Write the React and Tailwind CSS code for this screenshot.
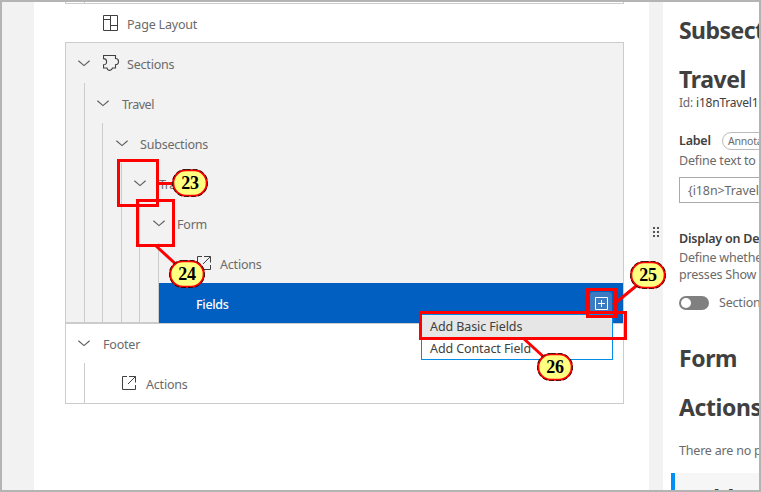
import React from "react";

const Chevron = ({ className = "" }) => (
  <svg className={`h-[7px] w-3 shrink-0 ${className}`} viewBox="0 0 12 7" fill="none" stroke="#5c5c5c" strokeWidth="1.15">
    <path d="M0.4 0.7 L6 5.6 L11.6 0.7" />
  </svg>
);

const LayoutIcon = () => (
  <svg className="h-4 w-[15px] shrink-0" viewBox="0 0 15 16" fill="none" stroke="#404040" strokeWidth="1">
    <path d="M.5 .5H14.5V15.5H.5Z M7.5 .5V15.5 M.5 4.5H7.5 M7.5 10.5H14.5" />
  </svg>
);

const PuzzleIcon = () => (
  <svg className="h-4 w-4 shrink-0" viewBox="0 0 16 16" fill="none" stroke="#404040" strokeWidth="1.1">
    <path d="M.5 .5H12.5V3.5C14.5 3.5 15.5 5 15.5 6.5S14.5 9.8 12.5 9.8V13H9.5C9 14.5 8.2 15.4 6.8 15.4S4.3 14.5 4 13H.5V9.8C2.5 9.8 3.6 8.5 3.6 6.7S2.5 3.6 .5 3.6Z" />
  </svg>
);

const ActionIcon = () => (
  <svg className="h-[14px] w-[14px] shrink-0" viewBox="0 0 14 14" fill="none" stroke="#404040" strokeWidth="1">
    <path d="M5 .5H.5V13.5H13.5V9 M7 .5H13.5V6.5 M13.5 .5L6 8" />
  </svg>
);

const Guide = ({ wide, end }) => (
  <span className={`shrink-0 self-stretch border-r border-[#cccccc] ${wide ? "w-[19px]" : "w-[18px]"} ${end ? "border-b" : ""}`} />
);

const Guides = ({ count, end }) =>
  Array.from({ length: count }, (_, i) => <Guide key={i} wide={i % 2 === 0} end={end} />);

const Row = ({ depth = 0, children }) => (
  <div className="flex h-10 items-center">
    <Guides count={depth} />
    {children}
  </div>
);

const Badge = ({ n, place }) => (
  <div className={`absolute ${place} flex h-7 w-9 items-center justify-center font-['Liberation_Serif',serif] text-[18px] font-bold leading-none tracking-[-0.2px] text-black`}>
    <svg className="absolute inset-0 h-7 w-9" viewBox="0 0 36 28" fill="none">
      <rect x="1.25" y="1.25" width="33.5" height="25.5" rx="12.5" fill="#ffff80" stroke="#ff0000" strokeWidth="2.2" />
      <rect x=".4" y=".4" width="35.2" height="27.2" rx="13.3" stroke="#000000" strokeWidth=".8" strokeDasharray="5 2" />
    </svg>
    <span className="relative">{n}</span>
  </div>
);

export default function App() {
  return (
    <div className="relative flex h-[492px] w-[761px] overflow-hidden border-2 border-[#b4b4b4] bg-white font-['Noto_Sans',sans-serif] text-[12.5px] leading-[18px] tracking-[-0.2px] text-[#6a6a6a]">
      <aside className="w-8 shrink-0 bg-[#f2f2f2]" />
      <main className="w-[615px] shrink-0 pl-[31px]">
        <div className="w-[559px]">
          <div className="flex h-0.5 border-x border-b border-[#cccccc]">
            <Guide wide />
          </div>
          <div className="flex h-[38px] items-center pl-[38px]">
            <LayoutIcon />
            <span className="ml-[9px] mt-[3px]">Page Layout</span>
          </div>
          <section className="border border-b-0 border-[#cccccc] bg-[#f2f2f2]">
            <Row><Chevron className="ml-3" /><span className="ml-[13px]"><PuzzleIcon /></span><span className="ml-2 mt-1">Sections</span></Row>
            <Row depth={1}><Chevron className="ml-3" /><span className="ml-[13px] mt-1 tracking-[-0.5px]">Travel</span></Row>
            <Row depth={2}><Chevron className="ml-[13px]" /><span className="ml-3 mt-1">Subsections</span></Row>
            <Row depth={3}><Chevron className="ml-3" /><span className="ml-[13px] mt-1 tracking-[-0.5px]">Travel</span></Row>
            <Row depth={4}><Chevron className="ml-[13px]" /><span className="ml-3 mt-1">Form</span></Row>
            <Row depth={5}><span className="ml-[38px]"><ActionIcon /></span><span className="ml-[9px] mt-1">Actions</span></Row>
            <div className="flex h-10">
              <Guides count={5} end />
              <div className="flex flex-1 items-center justify-between bg-[#005fc0] pl-[37px] pr-[11px] text-white">
                <span className="mt-1 font-medium tracking-[-0.3px]">Fields</span>
                <span className="flex h-[22px] w-[22px] items-center justify-center rounded-[3px] bg-[#3a7bc4]">
                  <svg className="h-[13px] w-[13px]" viewBox="0 0 13 13" fill="none" stroke="white">
                    <path d="M.5 .5H12.5V12.5H.5Z M3 6.5H10 M6.5 3V10" />
                  </svg>
                </span>
              </div>
            </div>
          </section>
          <section className="border border-[#cccccc]">
            <div className="flex h-[39px] items-center"><Chevron className="ml-3" /><span className="ml-[13px] mt-[3px]">Footer</span></div>
            <Row depth={1}><span className="ml-[37px]"><ActionIcon /></span><span className="ml-[10px] mt-1">Actions</span></Row>
          </section>
        </div>
      </main>
      <div className="flex w-[14px] shrink-0 items-center justify-center bg-[#f2f2f2]">
        <div className="mt-[-29px] grid grid-cols-2 gap-0.5">
          {[0, 1, 2, 3, 4, 5].map((i) => <i key={i} className="h-0.5 w-0.5 bg-[#555555]" />)}
        </div>
      </div>
      <section className="w-24 shrink-0 overflow-hidden whitespace-nowrap pl-4">
        <h1 className="mt-3 text-[23px] font-bold leading-8 tracking-[-0.55px] text-[#404040]">Subsection</h1>
        <h1 className="mt-[17px] text-[23px] font-bold leading-8 tracking-[-0.4px] text-[#404040]">Travel</h1>
        <p className="-mt-px text-[12px]">Id: <span className="text-[#404040]">i18nTravel1</span></p>
        <div className="mt-[19px] flex h-[19px] items-center">
          <b className="w-[43px] shrink-0 font-semibold text-[#404040]">Label</b>
          <span className="flex h-[18px] shrink-0 items-center rounded-full border border-[#bbbbbb] px-[5px] text-[10.5px]">Annotation</span>
        </div>
        <p className="mt-0.5">Define text to be</p>
        <div className="mt-[7px] flex h-[26px] w-40 items-center border border-[#aaaaaa] pl-2 pt-0.5 tracking-[-0.1px]">{"{i18n>Travel}"}</div>
        <p className="mt-[27px] font-semibold text-[#404040]">Display on Detail</p>
        <p className="mt-px leading-[17px]">Define whether<br />presses Show more</p>
        <div className="mt-[11px] flex items-center">
          <span className="flex h-[14px] w-[30px] shrink-0 items-center rounded-full bg-[#808080] pl-0.5"><i className="h-[10px] w-[10px] rounded-full bg-white" /></span>
          <span className="ml-[10px]">Section</span>
        </div>
        <h1 className="mt-[30px] text-[23px] font-bold leading-8 tracking-[-0.4px] text-[#404040]">Form</h1>
        <h1 className="mt-[17px] text-[23px] font-bold leading-8 tracking-[-0.4px] text-[#404040]">Actions</h1>
        <p className="mt-[19px]">There are no properties</p>
        <div className="-ml-2 mt-[13px] h-16 border-l-4 border-[#008ff5] bg-[#f6f6f6] pl-[15px] pt-[9px] text-[23px] font-bold leading-8 tracking-[-0.4px] text-[#404040]">Add</div>
      </section>

      <div className="absolute left-[419px] top-[312px] h-[46px] w-[192px] border border-[#008de8] bg-white tracking-[-0.1px] text-[#404040]">
        <div className="h-[23px] bg-[#e6e6e6] pl-2 leading-[24px]">Add Basic Fields</div>
        <div className="pl-2 leading-[22px]">Add Contact Field</div>
      </div>
      <svg className="absolute -left-0.5 -top-0.5 h-[492px] w-[761px]" viewBox="0 0 761 492" stroke="#ff0000" strokeWidth="3">
        <path d="M157 183.5H174 M155 245L180 268 M613 305L641 282 M523 338L546 359" />
      </svg>
      <div className="absolute left-[115px] top-[157px] h-12 w-[42px] border-3 border-[#ff0000]" />
      <div className="absolute left-[134px] top-[197px] h-12 w-[39px] border-3 border-[#ff0000]" />
      <div className="absolute left-[584px] top-[286px] h-[30px] w-[31px] border-3 border-[#ff0000]" />
      <div className="absolute left-[417px] top-[309px] h-[29px] w-[208px] border-3 border-[#ff0000]" />
      <Badge n="23" place="left-[170px] top-[167px]" />
      <Badge n="24" place="left-[167px] top-[258px]" />
      <Badge n="25" place="left-[628px] top-[259px]" />
      <Badge n="26" place="left-[535px] top-[351px]" />
    </div>
  );
}
